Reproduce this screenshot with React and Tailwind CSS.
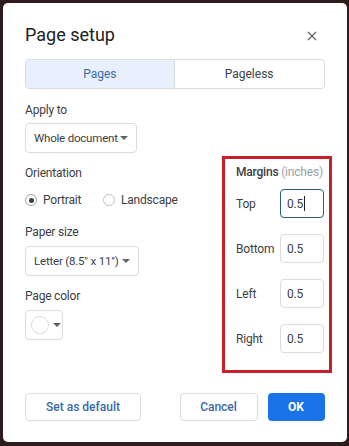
import React from "react";

const font = { fontFamily: "Roboto, 'Liberation Sans', sans-serif" };

function Caret() {
  return (
    <svg width="8" height="4" viewBox="0 0 8 4" className="shrink-0">
      <path d="M0 0 L8 0 L4 4 Z" fill="#5f6368" />
    </svg>
  );
}

function Select({ label, width }) {
  return (
    <div
      className={`flex items-center justify-between h-[30px] border border-[#dadce0] rounded-[4px] pl-[8px] pr-[8px] text-[11.5px] tracking-[-0.2px] text-[#3c4043] ${width}`}
    >
      <span className="leading-[16px] whitespace-nowrap">{label}</span>
      <Caret />
    </div>
  );
}

function MarginRow({ label, focused }) {
  return (
    <div className="flex items-center justify-between">
      <span className="text-[12px] leading-[16px] text-[#3c4043]">{label}</span>
      <div
        className={`flex items-center w-[44px] h-[29px] rounded-[4px] pl-[6px] text-[12px] text-[#3c4043] ${
          focused ? "border border-[#2b5d77]" : "border border-[#dadce0]"
        }`}
      >
        <span className="leading-[16px]">0.5</span>
        {focused && <span className="ml-[1px] w-[1px] h-[15px] bg-[#202124]" />}
      </div>
    </div>
  );
}

export default function App() {
  return (
    <div
      className="w-[349px] h-[446px] bg-[#2d1b1e] pt-[3px] pl-[3px] pr-[2.5px] pb-[4px]"
      style={font}
    >
      <div className="h-full bg-white rounded-[5px] pt-[20px] px-[22px] pb-[21px] flex flex-col">
        {/* header */}
        <div className="flex items-center justify-between h-[24px]">
          <span className="text-[18px] leading-[24px] text-[#202124]">Page setup</span>
          <svg width="10" height="10" viewBox="0 0 10 10" className="mr-[8px] mt-[1px]">
            <path d="M1 1 L9 9 M9 1 L1 9" stroke="#5f6368" strokeWidth="1.3" />
          </svg>
        </div>

        {/* tabs */}
        <div className="mt-[12px] flex h-[30px] border border-[#dadce0] rounded-[4px] overflow-hidden text-[12px]">
          <div className="w-1/2 flex items-center justify-center bg-[#e8f0fe] text-[#3a6aa6] border-r border-[#dadce0]">
            Pages
          </div>
          <div className="w-1/2 flex items-center justify-center text-[#3c4043]">Pageless</div>
        </div>

        {/* body */}
        <div className="mt-[13px] flex tracking-[-0.2px]">
          <div className="w-[197px] shrink-0 flex flex-col">
            <span className="text-[12px] leading-[16px] text-[#3c4043]">Apply to</span>
            <div className="mt-[5px]">
              <Select label="Whole document" width="w-[112px]" />
            </div>

            <span className="mt-[12px] text-[12px] leading-[16px] text-[#3c4043]">Orientation</span>
            <div className="mt-[11px] flex items-center h-[16px] text-[12px] text-[#3c4043]">
              <div className="w-[78px] flex items-center">
                <span className="w-[12px] h-[12px] rounded-full border border-[#9aa0a6] flex items-center justify-center">
                  <span className="w-[5px] h-[5px] rounded-full bg-[#3c4043]" />
                </span>
                <span className="ml-[6px]">Portrait</span>
              </div>
              <span className="w-[12px] h-[12px] rounded-full border border-[#bdc1c6]" />
              <span className="ml-[6px]">Landscape</span>
            </div>

            <span className="mt-[16px] text-[12px] leading-[16px] text-[#3c4043]">Paper size</span>
            <div className="mt-[6px]">
              <Select label={'Letter (8.5" x 11")'} width="w-[114px]" />
            </div>

            <span className="mt-[12px] text-[12px] leading-[16px] text-[#3c4043]">Page color</span>
            <div className="mt-[6px] flex items-center gap-[4px] w-[38px] h-[30px] border border-[#dadce0] rounded-[4px] pl-[5px]">
              <span className="w-[18px] h-[18px] rounded-full border border-[#dadce0] bg-white" />
              <Caret />
            </div>
          </div>

          {/* margins */}
          <div className="mt-[54px] w-[110px] h-[217px] shrink-0 border-[3px] border-[#c8202a] pl-[11px] pr-[5px] pt-[5px] flex flex-col">
            <div className="text-[12px] leading-[16px] whitespace-nowrap">
              <span className="font-medium text-[#3c4043]">Margins</span>{" "}
              <span className="text-[#9aa0a6]">(inches)</span>
            </div>
            <div className="mt-[9px] flex flex-col gap-[16px]">
              <MarginRow label="Top" focused />
              <MarginRow label="Bottom" />
              <MarginRow label="Left" />
              <MarginRow label="Right" />
            </div>
          </div>
        </div>

        {/* footer */}
        <div className="mt-auto flex items-center text-[12px] font-medium">
          <div className="w-[116px] h-[28px] flex items-center justify-center border border-[#dadce0] rounded-[4px] text-[#3a6aa6]">
            Set as default
          </div>
          <div className="ml-auto w-[78px] h-[28px] flex items-center justify-center border border-[#dadce0] rounded-[4px] text-[#3a6aa6]">
            Cancel
          </div>
          <div className="ml-[10px] w-[57px] h-[28px] flex items-center justify-center rounded-[4px] bg-[#1a73e8] text-white font-bold">
            OK
          </div>
        </div>
      </div>
    </div>
  );
}
